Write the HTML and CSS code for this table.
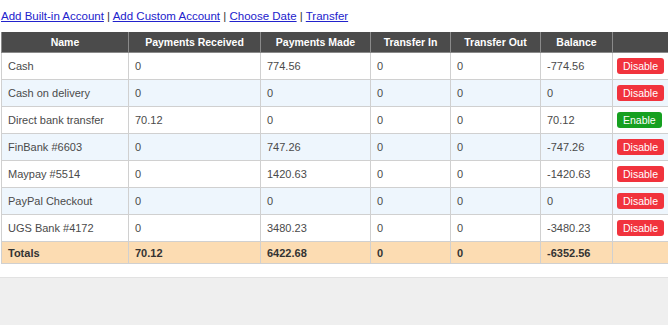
FILE: index.html
```html
<!DOCTYPE html>
<html>
<head>
<meta charset="utf-8">
<link rel="stylesheet" href="styles.css">
</head>
<body>
<div class="page">
  <div class="links">
    <a href="#">Add Built-in Account</a> | <a href="#">Add Custom Account</a> | <a href="#">Choose Date</a> | <a href="#">Transfer</a>
  </div>
  <table class="accounts">
    <colgroup>
      <col class="c-name"><col class="c-pr"><col class="c-pm"><col class="c-ti"><col class="c-to"><col class="c-bal"><col class="c-act">
    </colgroup>
    <thead>
      <tr><th>Name</th><th>Payments Received</th><th>Payments Made</th><th>Transfer In</th><th>Transfer Out</th><th>Balance</th><th></th></tr>
    </thead>
    <tbody>
      <tr><td>Cash</td><td>0</td><td>774.56</td><td>0</td><td>0</td><td>-774.56</td><td><span class="btn btn-off">Disable</span></td></tr>
      <tr><td>Cash on delivery</td><td>0</td><td>0</td><td>0</td><td>0</td><td>0</td><td><span class="btn btn-off">Disable</span></td></tr>
      <tr><td>Direct bank transfer</td><td>70.12</td><td>0</td><td>0</td><td>0</td><td>70.12</td><td><span class="btn btn-on">Enable</span></td></tr>
      <tr><td>FinBank #6603</td><td>0</td><td>747.26</td><td>0</td><td>0</td><td>-747.26</td><td><span class="btn btn-off">Disable</span></td></tr>
      <tr><td>Maypay #5514</td><td>0</td><td>1420.63</td><td>0</td><td>0</td><td>-1420.63</td><td><span class="btn btn-off">Disable</span></td></tr>
      <tr><td>PayPal Checkout</td><td>0</td><td>0</td><td>0</td><td>0</td><td>0</td><td><span class="btn btn-off">Disable</span></td></tr>
      <tr><td>UGS Bank #4172</td><td>0</td><td>3480.23</td><td>0</td><td>0</td><td>-3480.23</td><td><span class="btn btn-off">Disable</span></td></tr>
    </tbody>
    <tfoot>
      <tr><td>Totals</td><td>70.12</td><td>6422.68</td><td>0</td><td>0</td><td>-6352.56</td><td></td></tr>
    </tfoot>
  </table>
</div>
</body>
</html>
```
FILE: styles.css
```css
html { background: #efefef; }
body {
  margin: 0;
  font-family: "Liberation Sans", Arial, sans-serif;
  color: #333;
}
.page {
  background: #fff;
  padding: 8px 0 13px 1px;
  border-bottom: 1px solid #e2e2e2;
  overflow: hidden;
}
.links {
  font-size: 11.5px;
  line-height: 16px;
  color: #333;
  margin-bottom: 8px;
}
.links a { color: #2222cc; }
.accounts {
  border-collapse: collapse;
  table-layout: fixed;
  width: 672px;
  font-size: 11px;
}
.c-name { width: 127px; }
.c-pr { width: 132px; }
.c-pm { width: 110px; }
.c-ti { width: 80px; }
.c-to { width: 90px; }
.c-bal { width: 72px; }
.c-act { width: 61px; }
.accounts th {
  background: #4b4b4b;
  color: #fff;
  font-weight: bold;
  font-size: 10.5px;
  height: 20px;
  padding: 0;
  border: 1px solid #8a8a8a;
  border-top: none;
  text-align: center;
}
.accounts td {
  height: 26px;
  padding: 0 6px;
  border: 1px solid #d0d0d0;
  color: #4a4a4a;
  white-space: nowrap;
}
.accounts tbody tr:nth-child(even) td { background: #eef6fd; }
.accounts tfoot td {
  background: #fcdcb2;
  font-weight: bold;
  height: 21px;
  color: #333;
}
.btn {
  display: inline-block;
  color: #fff;
  font-size: 10.5px;
  line-height: 16px;
  padding: 0 6px;
  border-radius: 3px;
  margin-left: -2px;
}
.btn-off { background: #f1333d; }
.btn-on { background: #16a020; }
```
